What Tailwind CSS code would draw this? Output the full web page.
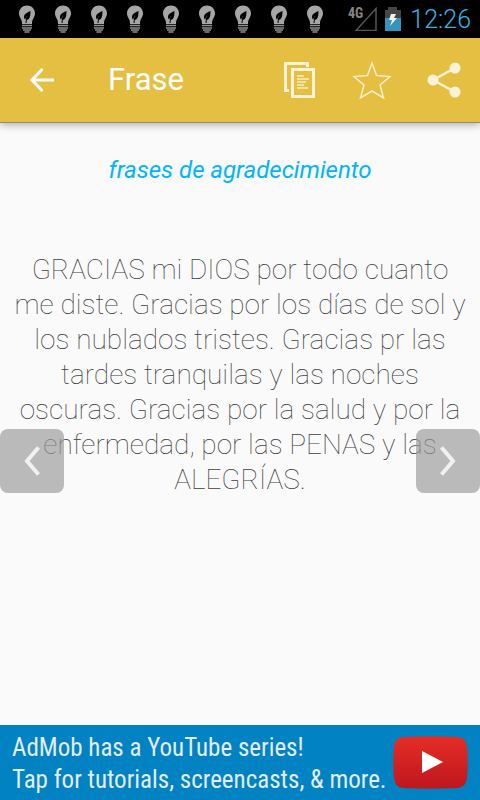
<!DOCTYPE html>
<html lang="es">
<head>
    <meta charset="UTF-8">
    <meta name="viewport" content="width=device-width, initial-scale=1.0">
    <script src="https://cdn.jsdelivr.net/npm/@tailwindcss/browser@4"></script>
    <title>Frase</title>
</head>
<body class="min-h-screen flex flex-col bg-[#fafafa] font-['Roboto',sans-serif]">
    <!--status bar-->
    <div class="h-[38px] flex items-center justify-between bg-black pl-[18px] pr-[9px]">
        <svg class="hidden">
            <symbol id="bulb" viewBox="0 0 18 28">
                <path fill="#a6a6a6" d="M9 0.500C4.500 0.500 1 4 1 8.300C1 12.500 4 14 4 18V19H14V18C14 14 17 12.500 17 8.300C17 4 13.500 0.500 9 0.500Z"/>
                <path fill="#000" d="M12.500 6C9.500 7.500 6 8.500 6 12C6 13 6.500 14 7 14.500L9.500 10L8.500 15C11.500 14.500 12.500 12 12.500 6Z"/>
                <path stroke="#000" fill="none" d="M9.500 10Q8 14 8 18"/>
                <path stroke="#8f8f8f" stroke-width="1.500" d="M4 20.500H14M4 23H14M5 25H13M6.500 27H11.500"/>
            </symbol>
        </svg>
        <div class="flex gap-[18px]">
            <svg class="w-[18px] h-7"><use href="#bulb"/></svg>
            <svg class="w-[18px] h-7"><use href="#bulb"/></svg>
            <svg class="w-[18px] h-7"><use href="#bulb"/></svg>
            <svg class="w-[18px] h-7"><use href="#bulb"/></svg>
            <svg class="w-[18px] h-7"><use href="#bulb"/></svg>
            <svg class="w-[18px] h-7"><use href="#bulb"/></svg>
            <svg class="w-[18px] h-7"><use href="#bulb"/></svg>
            <svg class="w-[18px] h-7"><use href="#bulb"/></svg>
            <svg class="w-[18px] h-7"><use href="#bulb"/></svg>
        </div>
        <div class="flex items-center">
            <span class="self-start pt-1 text-[14px] leading-[18px] font-bold font-['Roboto_Condensed','Roboto',sans-serif] text-[#858585]">4G</span>
            <svg class="w-[22px] h-6 -ml-2" viewBox="0 0 22 24" fill="none" stroke="#555">
                <path stroke-width="1.500" d="M1 23.500H21V1.500Z"/>
            </svg>
            <svg class="w-4 h-6 ml-2" viewBox="0 0 16 24">
                <path fill="#454545" d="M3 0H12V3H16V12H0V3H3Z"/>
                <path fill="#3594b9" d="M0 11H16V24H0Z"/>
                <path fill="#f2f2f2" d="M6 7H11L9 11H12L5 19L7 13H4Z"/>
            </svg>
            <span class="ml-[9px] pt-[2px] text-[25px] leading-9 font-light text-[#33b5e5]">12:26</span>
        </div>
    </div>

    <!--toolbar-->
    <header class="h-[85px] flex items-center bg-[#e5bf41] border-b border-[#8d8b78] shadow-[0_2px_8px_rgba(0,0,0,0.3)]">
        <button type="button" aria-label="Volver" class="w-[84px] h-full flex items-center justify-center">
            <svg class="w-6 h-6" viewBox="0 0 24 24" fill="none" stroke="#fff" stroke-width="3">
                <path d="M12.500 1L2 12L12.500 23M2 12H24"/>
            </svg>
        </button>
        <h1 class="ml-6 flex-1 text-[31px] leading-9 text-white">Frase</h1>
        <button type="button" aria-label="Copiar" class="w-[72px] h-full flex items-center justify-center">
            <svg class="w-8 h-9" viewBox="0 0 32 36" fill="none" stroke="#fbf2d8">
                <path stroke-width="3" d="M23.500 5V1.500H1.500V28.500H5M8.500 7.500H29.500V34.500H8.500Z"/>
                <path stroke-width="2" stroke="#f3e0a4" d="M13 14H20M13 17H25M13 20H22M13 23H20M13 26H24"/>
            </svg>
        </button>
        <button type="button" aria-label="Favorito" class="w-[72px] h-full flex items-center justify-center">
            <svg class="w-10 h-10" viewBox="0 0 40 40" fill="none" stroke="#fbefca" stroke-width="1.500">
                <path d="M20 3L24.500 15.500L38 16.500L28 25L31.500 38L20 31L8.500 38L12 25L2 16.500L15.500 15.500Z"/>
            </svg>
        </button>
        <button type="button" aria-label="Compartir" class="w-[72px] h-full flex items-center justify-center">
            <svg class="w-[34px] h-9" viewBox="0 0 34 36" fill="#fbf2d8">
                <path stroke="#fbf2d8" stroke-width="2.500" fill="none" d="M28 6L6 18L28 30"/>
                <circle cx="28" cy="6" r="5.500"/>
                <circle cx="6" cy="18" r="5.500"/>
                <circle cx="28" cy="30" r="5.500"/>
            </svg>
        </button>
    </header>

    <!--frase-->
    <main class="relative flex-1 px-3 pt-8 text-center">
        <h2 class="text-[24px] leading-[30px] italic text-[#00b4ff]">frases de agradecimiento</h2>
        <p class="mt-[67px] text-[28px] leading-[35px] font-thin text-[#404040]">GRACIAS mi DIOS por todo cuanto me diste. Gracias por los días de sol y los nublados tristes. Gracias pr las tardes tranquilas y las noches oscuras. Gracias por la salud y por la enfermedad, por las PENAS y las ALEGRÍAS.</p>
        <button type="button" aria-label="Anterior" class="absolute left-0 top-[306px] size-16 rounded-lg bg-[#999]/67 flex items-center justify-center">
            <svg class="w-4 h-8" viewBox="0 0 16 32" fill="none" stroke="#f1f1f1" stroke-width="4">
                <path d="M14.500 2.500L3 16L14.500 29.500"/>
            </svg>
        </button>
        <button type="button" aria-label="Siguiente" class="absolute right-0 top-[306px] size-16 rounded-lg bg-[#999]/67 flex items-center justify-center">
            <svg class="w-4 h-8" viewBox="0 0 16 32" fill="none" stroke="#f1f1f1" stroke-width="4">
                <path d="M1.500 2.500L13 16L1.500 29.500"/>
            </svg>
        </button>
    </main>

    <!--anuncio-->
    <a href="#" class="h-[75px] flex items-center justify-between bg-[#0082c3] pl-3 pr-3 text-[#e3edf3]">
        <span class="pt-[2px] text-[25px] leading-8 whitespace-nowrap font-['Roboto_Condensed','Roboto',sans-serif]">AdMob has a YouTube series!<br>Tap for tutorials, screencasts, &amp; more.</span>
        <svg class="w-[75px] h-[53px] shrink-0" viewBox="0 0 75 53">
            <defs>
                <linearGradient id="red" x1="0" y1="0" x2="0" y2="1">
                    <stop offset="0" stop-color="#e52d27"/>
                    <stop offset="1" stop-color="#bf171d"/>
                </linearGradient>
            </defs>
            <path fill="url(#red)" d="M10 1Q37 -0.500 65 1Q73 1.500 74 11Q75.500 26 74 42Q73 51 65 52Q37 53.500 10 52Q2 51.500 1 42Q-0.500 26 1 11Q2 1.500 10 1Z"/>
            <path fill="#fff" d="M29 15L50 26L29 37Z"/>
        </svg>
    </a>
</body>
</html>
